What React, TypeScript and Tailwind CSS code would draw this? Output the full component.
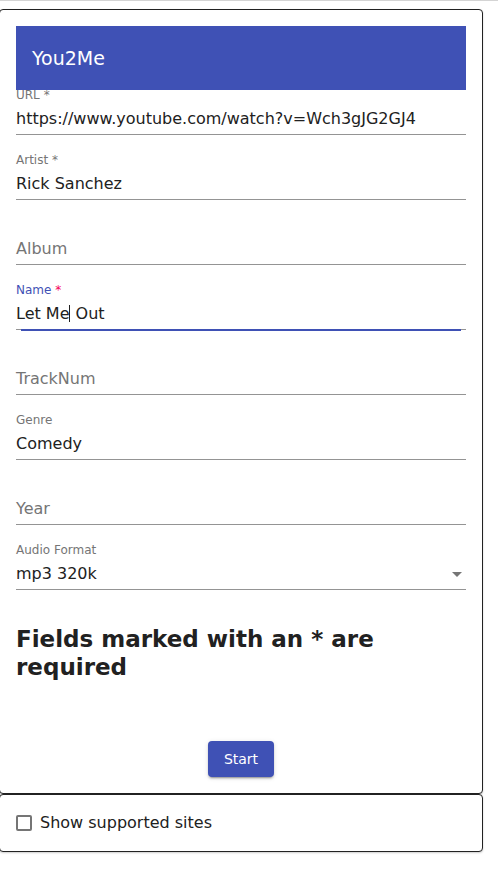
import React from "react";

const font = { fontFamily: '"DejaVu Sans", sans-serif' };

function Field({
  label,
  value,
  required,
  placeholder,
}: {
  label?: string;
  value?: string;
  required?: boolean;
  placeholder?: string;
}) {
  return (
    <div className="h-[45px] border-b border-[#949494] box-border">
      <div className="h-[11px] text-[12px] leading-[11px] text-[#757575]">
        {label ? (
          <>
            {label}
            {required ? " *" : ""}
          </>
        ) : null}
      </div>
      <div
        className={
          "mt-[8px] h-[19px] text-[16px] leading-[19px] " +
          (placeholder ? "text-[#757575]" : "text-[#212121]")
        }
      >
        {placeholder ?? value}
      </div>
    </div>
  );
}

export default function App() {
  return (
    <div style={font} className="w-[498px] min-h-[869px] bg-white">
      <div className="h-px bg-[#d4d4d4]" />
      <div className="mt-[8px] ml-[-1px] w-[484px] border border-[#222] rounded-[4px] px-4 pt-4 pb-4 bg-white shadow-[0_1px_2px_rgba(0,0,0,0.2)]">
        <div className="h-16 bg-[#3f51b5] flex items-center px-4 text-[19px] text-white">
          You2Me
        </div>
        <Field label="URL" required value="https://www.youtube.com/watch?v=Wch3gJG2GJ4" />
        <div className="mt-[20px]">
          <Field label="Artist" required value="Rick Sanchez" />
        </div>
        <div className="mt-[20px]">
          <Field placeholder="Album" />
        </div>
        <div className="mt-[20px] relative h-[45px] border-b border-[#949494] box-border">
          <div className="h-[11px] text-[12px] leading-[11px] text-[#3f51b5]">
            Name <span className="text-[#f50057]">*</span>
          </div>
          <div className="mt-[8px] h-[19px] text-[16px] leading-[19px] text-[#212121] flex items-center whitespace-pre">
            <span>Let Me</span>
            <span className="inline-block w-px h-[17px] bg-[#212121]" />
            <span> Out</span>
          </div>
          <div className="absolute left-[5px] right-[5px] bottom-[-2px] h-[2px] bg-[#3f51b5]" />
        </div>
        <div className="mt-[20px]">
          <Field placeholder="TrackNum" />
        </div>
        <div className="mt-[20px]">
          <Field label="Genre" value="Comedy" />
        </div>
        <div className="mt-[20px]">
          <Field placeholder="Year" />
        </div>
        <div className="mt-[20px] h-[45px] border-b border-[#949494] box-border">
          <div className="h-[11px] text-[12px] leading-[11px] text-[#757575]">Audio Format</div>
          <div className="mt-[8px] h-[19px] flex items-center">
            <span className="flex-1 text-[16px] leading-[19px] text-[#212121]">mp3 320k</span>
            <svg viewBox="0 0 24 24" className="w-6 h-6 mr-[-3px] fill-[#757575]">
              <path d="M7 10l5 5 5-5z" />
            </svg>
          </div>
        </div>
        <h2 className="mt-[35px] text-[23px] leading-[28px] font-bold text-[#212121]">
          Fields marked with an * are required
        </h2>
        <div className="mt-[60px] flex justify-center">
          <button className="h-9 px-4 rounded-[4px] bg-[#3f51b5] text-white text-[14px] shadow-[0_3px_1px_-2px_rgba(0,0,0,0.2),0_2px_2px_0_rgba(0,0,0,0.14),0_1px_5px_0_rgba(0,0,0,0.12)]">
            Start
          </button>
        </div>
      </div>
      <div className="ml-[-1px] w-[484px] h-[58px] box-border border border-[#222] rounded-[4px] px-4 flex items-center gap-2 bg-white shadow-[0_1px_2px_rgba(0,0,0,0.2)]">
        <span className="w-4 h-4 border-2 border-[#757575] rounded-[2px] box-border" />
        <span className="text-[16px] text-[#212121]">Show supported sites</span>
      </div>
    </div>
  );
}
